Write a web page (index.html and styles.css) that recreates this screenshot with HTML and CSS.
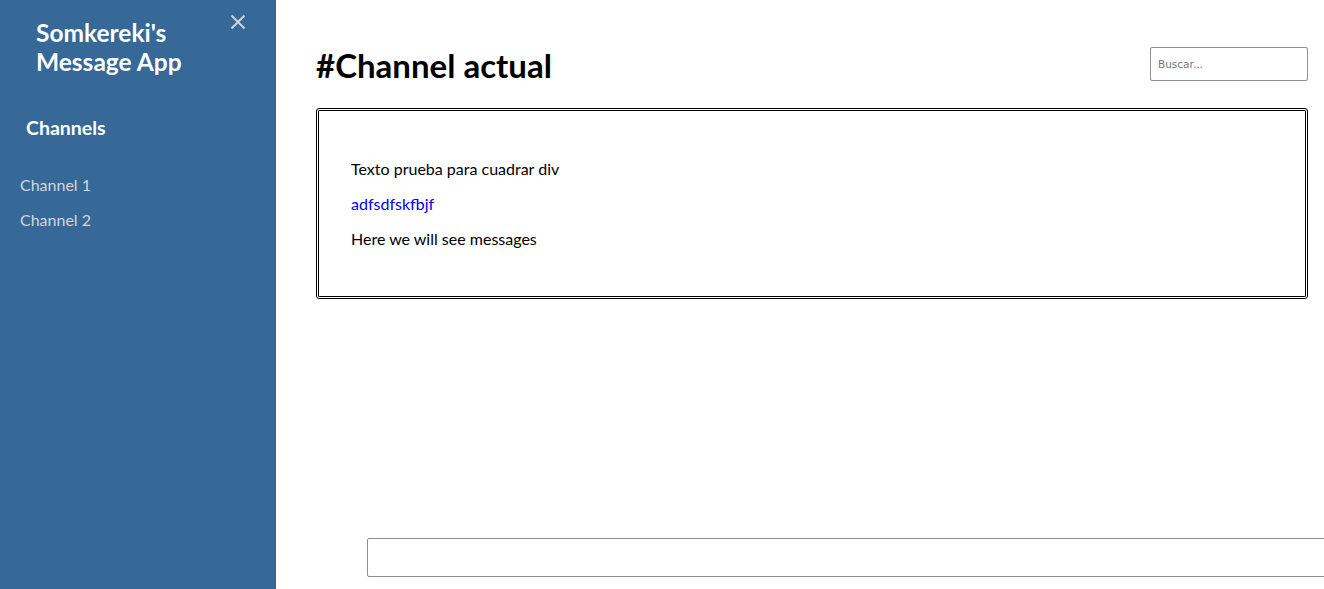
FILE: index.html
```html
<!DOCTYPE html>
<html lang="es">
<head>
<meta charset="utf-8">
<title>Somkereki's Message App</title>
<link rel="stylesheet" href="styles.css">
</head>
<body>
<div class="app">
  <aside class="sidebar">
    <div class="sidebar-top">
      <h2 class="brand">Somkereki's Message App</h2>
      <button class="close" aria-label="Cerrar">
        <svg width="16" height="16" viewBox="0 0 16 16"><path d="M1.5 1.5 L14.5 14.5 M14.5 1.5 L1.5 14.5" stroke="#cfd3da" stroke-width="2" fill="none"/></svg>
      </button>
    </div>
    <h3 class="channels-title">Channels</h3>
    <nav class="channel-list">
      <a href="#" class="channel">Channel 1</a>
      <a href="#" class="channel">Channel 2</a>
    </nav>
  </aside>
  <main class="main">
    <header class="header">
      <h1 class="title">#Channel actual</h1>
      <input class="search" type="text" placeholder="Buscar...">
    </header>
    <section class="messages">
      <p>Texto prueba para cuadrar div</p>
      <p class="link">adfsdfskfbjf</p>
      <p>Here we will see messages</p>
    </section>
    <div class="composer">
      <input class="composer-input" type="text">
    </div>
  </main>
</div>
</body>
</html>
```

FILE: styles.css
```css
html, body {
  margin: 0;
  padding: 0;
  height: 100%;
  overflow: hidden;
}
body {
  font-family: Lato, "Liberation Sans", sans-serif;
  background: #ffffff;
  color: #000;
}
.app {
  display: flex;
  height: 100vh;
}
.sidebar {
  width: 276px;
  flex: 0 0 276px;
  background: #366898;
  color: #fff;
  display: flex;
  flex-direction: column;
}
.sidebar-top {
  display: flex;
  align-items: flex-start;
  padding: 18px 0 0 36px;
}
.brand {
  margin: 0;
  font-size: 24.5px;
  line-height: 29px;
  font-weight: 700;
  width: 170px;
}
.close {
  border: none;
  background: none;
  padding: 0;
  margin: -4px 0 0 24px;
  width: 16px;
  height: 16px;
  cursor: pointer;
  display: flex;
}
.channels-title {
  margin: 40px 0 0 26px;
  font-size: 19.5px;
  line-height: 23px;
  font-weight: 700;
}
.channel-list {
  display: flex;
  flex-direction: column;
  padding: 37px 0 0 20px;
  gap: 17px;
}
.channel {
  font-size: 16px;
  line-height: 18px;
  color: #d3d6dc;
  text-decoration: none;
}
.main {
  flex: 1;
  display: flex;
  flex-direction: column;
  padding: 0 16px 0 40px;
  min-width: 0;
}
.header {
  display: flex;
  justify-content: space-between;
  align-items: flex-start;
  padding-top: 47px;
}
.title {
  margin: -1px 0 0 0;
  font-size: 33px;
  font-weight: 700;
  line-height: 38px;
}
.search {
  width: 158px;
  height: 34px;
  box-sizing: border-box;
  border: 1px solid #8f8d9b;
  border-radius: 2px;
  padding: 0 7px;
  font-family: "DejaVu Sans", sans-serif;
  font-size: 10.5px;
  outline: none;
}
.search::placeholder {
  color: #757575;
}
.messages {
  margin-top: 24px;
  border: 3px double #000;
  border-radius: 3px;
  padding: 32px 32px 30px;
  height: 191px;
  box-sizing: border-box;
  font-size: 16px;
}
.messages p {
  margin: 16px 0;
  line-height: 19.2px;
}
.link {
  color: #0000ee;
}
.composer {
  margin-top: auto;
  padding: 0 0 12px 51px;
}
.composer-input {
  width: 1000px;
  height: 39px;
  box-sizing: border-box;
  border: 1px solid #8f8d9b;
  border-radius: 2px;
  outline: none;
  display: block;
}
```
